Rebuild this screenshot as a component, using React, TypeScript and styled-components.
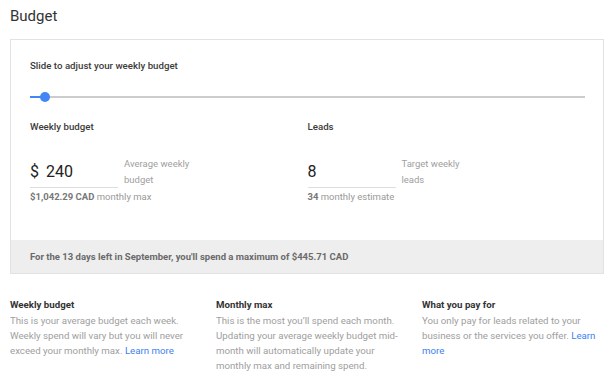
import React, { useState } from 'react'
import styled, { createGlobalStyle } from 'styled-components'

const GlobalStyle = createGlobalStyle`
  body {
    margin: 0;
    background: #ffffff;
    font-family: Roboto, "Liberation Sans", Arial, sans-serif;
  }
`

const StyledPage = styled.div`
  padding: 6px 9px 0 10px;
`

const StyledTitle = styled.h1`
  margin: 0 0 13px 0;
  font-size: 15px;
  line-height: 20px;
  font-weight: 400;
  color: #333333;
`

const StyledCard = styled.section`
  border: 1px solid #e2e2e2;
`

const StyledCardBody = styled.div`
  padding: 19px 18px 36px 19px;
`

const StyledLabel = styled.div`
  font-size: 9.7px;
  line-height: 14px;
  font-weight: 500;
  color: #3c3c3c;
`

const StyledSlider = styled.div`
  margin: 19px 0 18px 0;
  height: 10px;
  display: flex;
  align-items: center;
`

const StyledTrack = styled.div`
  flex: 1;
  height: 2px;
  background: #cccccc;
  position: relative;
`

const StyledFill = styled.div`
  position: absolute;
  left: 0;
  top: 0;
  height: 2px;
  background: #4285f4;
`

const StyledThumb = styled.div`
  position: absolute;
  top: -4px;
  width: 10px;
  height: 10px;
  margin-left: -5px;
  border-radius: 50%;
  background: #4285f4;
`

const StyledFields = styled.div`
  display: grid;
  grid-template-columns: 1fr 1fr;
`

const StyledField = styled.div`
  display: flex;
  flex-direction: column;
`

const StyledInputRow = styled.div`
  display: flex;
  align-items: flex-start;
  margin-top: 24px;
`

const StyledInput = styled.div`
  width: 88px;
  height: 30px;
  box-sizing: border-box;
  border-bottom: 1px solid #dddddd;
  font-size: 16px;
  line-height: 28px;
  color: #222222;
`

const StyledCurrency = styled.span`
  margin-right: 7px;
`

const StyledHint = styled.div`
  margin-left: 6px;
  margin-top: -2px;
  width: 75px;
  font-size: 9.5px;
  line-height: 16px;
  color: #a0a0a0;
`

const StyledSub = styled.div`
  margin-top: 2px;
  font-size: 9.5px;
  line-height: 14px;
  color: #999999;

  b {
    font-weight: 700;
    color: #777777;
  }
`

const StyledNotice = styled.div`
  background: #eeeeee;
  padding: 11px 19px 10px 19px;
  font-size: 9.5px;
  line-height: 12px;
  font-weight: 700;
  color: #6a6a6a;
`

const StyledInfoGrid = styled.div`
  display: grid;
  grid-template-columns: repeat(3, 206px);
  margin-top: 23px;
`

const StyledInfo = styled.div`
  padding-right: 20px;
`

const StyledInfoTitle = styled.div`
  font-size: 9.7px;
  line-height: 15px;
  font-weight: 700;
  color: #333333;
`

const StyledInfoText = styled.p`
  margin: 1px 0 0 0;
  font-size: 9.7px;
  line-height: 15px;
  color: #9e9e9e;

  a {
    color: #3d7ff2;
    text-decoration: none;
  }
`

const infoList = [
  {
    title: 'Weekly budget',
    text: 'This is your average budget each week. Weekly spend will vary but you will never exceed your monthly max.',
    link: true,
  },
  {
    title: 'Monthly max',
    text: 'This is the most you\u2019ll spend each month. Updating your average weekly budget mid-month will automatically update your monthly max and remaining spend.',
    link: false,
  },
  {
    title: 'What you pay for',
    text: 'You only pay for leads related to your business or the services you offer.',
    link: true,
  },
]

export default function App() {
  const [progress] = useState(2.7)

  return (
    <StyledPage>
      <GlobalStyle />
      <StyledTitle>Budget</StyledTitle>
      <StyledCard>
        <StyledCardBody>
          <StyledLabel>Slide to adjust your weekly budget</StyledLabel>
          <StyledSlider>
            <StyledTrack>
              <StyledFill style={{ width: `${progress}%` }} />
              <StyledThumb style={{ left: `${progress}%` }} />
            </StyledTrack>
          </StyledSlider>
          <StyledFields>
            <StyledField>
              <StyledLabel>Weekly budget</StyledLabel>
              <StyledInputRow>
                <StyledInput>
                  <StyledCurrency>$</StyledCurrency>240
                </StyledInput>
                <StyledHint>Average weekly budget</StyledHint>
              </StyledInputRow>
              <StyledSub>
                <b>$1,042.29 CAD</b> monthly max
              </StyledSub>
            </StyledField>
            <StyledField>
              <StyledLabel>Leads</StyledLabel>
              <StyledInputRow>
                <StyledInput>8</StyledInput>
                <StyledHint>Target weekly leads</StyledHint>
              </StyledInputRow>
              <StyledSub>
                <b>34</b> monthly estimate
              </StyledSub>
            </StyledField>
          </StyledFields>
        </StyledCardBody>
        <StyledNotice>
          For the 13 days left in September, you'll spend a maximum of $445.71 CAD
        </StyledNotice>
      </StyledCard>
      <StyledInfoGrid>
        {infoList.map((info) => (
          <StyledInfo key={info.title}>
            <StyledInfoTitle>{info.title}</StyledInfoTitle>
            <StyledInfoText>
              {info.text}
              {info.link ? (
                <>
                  {' '}
                  <a href="#">Learn more</a>
                </>
              ) : (
                ''
              )}
            </StyledInfoText>
          </StyledInfo>
        ))}
      </StyledInfoGrid>
    </StyledPage>
  )
}
